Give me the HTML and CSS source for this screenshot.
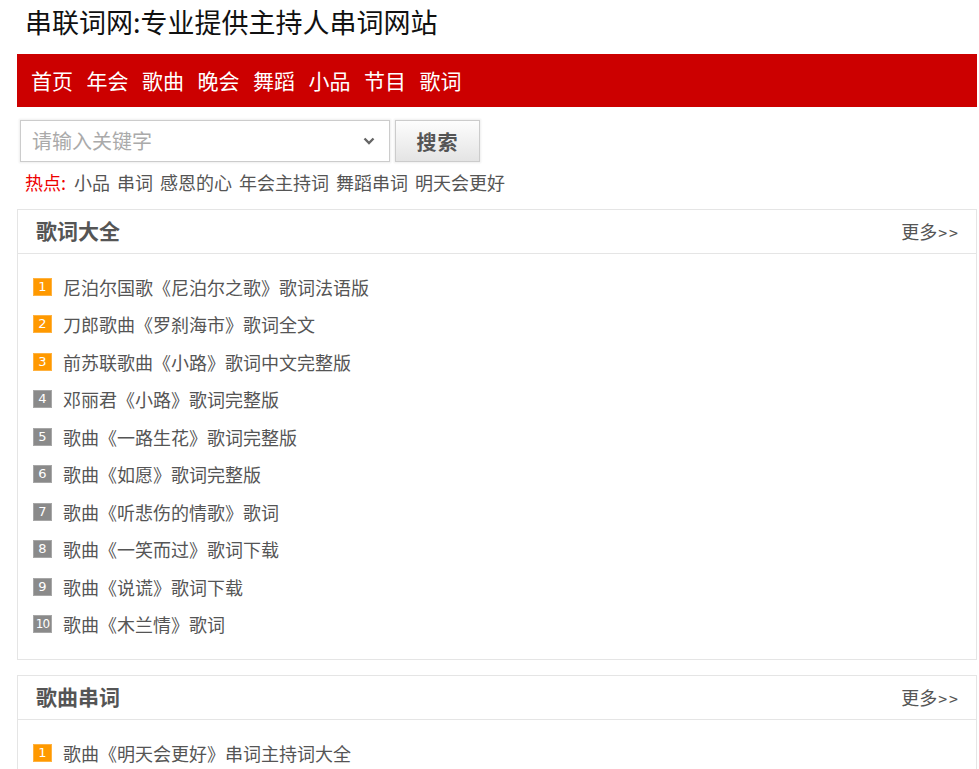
FILE: index.html
```html
<!DOCTYPE html>
<html lang="zh-CN">
<head>
<meta charset="utf-8">
<title>串联词网</title>
<link rel="stylesheet" href="styles.css">
</head>
<body>
<div class="page">
  <h1 class="site-title">串联词网:专业提供主持人串词网站</h1>
  <nav class="nav">
    <a>首页</a><a>年会</a><a>歌曲</a><a>晚会</a><a>舞蹈</a><a>小品</a><a>节目</a><a>歌词</a>
  </nav>
  <div class="search">
    <div class="search-box">
      <span class="placeholder">请输入关键字</span>
      <svg class="chev" width="12" height="8" viewBox="0 0 12 8"><path d="M1.5 1.5 L6 6 L10.5 1.5" fill="none" stroke="#666" stroke-width="2.4"/></svg>
    </div>
    <div class="search-btn">搜索</div>
  </div>
  <div class="hot"><span class="hot-label">热点:</span><a>小品</a><a>串词</a><a>感恩的心</a><a>年会主持词</a><a>舞蹈串词</a><a>明天会更好</a></div>

  <section class="box">
    <div class="box-head"><h2>歌词大全</h2><a class="more">更多<span class="arr">&gt;&gt;</span></a></div>
    <ul class="list">
      <li><span class="num hl">1</span>尼泊尔国歌《尼泊尔之歌》歌词法语版</li>
      <li><span class="num hl">2</span>刀郎歌曲《罗刹海市》歌词全文</li>
      <li><span class="num hl">3</span>前苏联歌曲《小路》歌词中文完整版</li>
      <li><span class="num">4</span>邓丽君《小路》歌词完整版</li>
      <li><span class="num">5</span>歌曲《一路生花》歌词完整版</li>
      <li><span class="num">6</span>歌曲《如愿》歌词完整版</li>
      <li><span class="num">7</span>歌曲《听悲伤的情歌》歌词</li>
      <li><span class="num">8</span>歌曲《一笑而过》歌词下载</li>
      <li><span class="num">9</span>歌曲《说谎》歌词下载</li>
      <li><span class="num two">10</span>歌曲《木兰情》歌词</li>
    </ul>
  </section>

  <section class="box">
    <div class="box-head"><h2>歌曲串词</h2><a class="more">更多<span class="arr">&gt;&gt;</span></a></div>
    <ul class="list">
      <li><span class="num hl">1</span>歌曲《明天会更好》串词主持词大全</li>
    </ul>
  </section>
</div>
</body>
</html>
```
FILE: styles.css
```css
* { box-sizing: border-box; }
body {
  margin: 0;
  font-family: "Noto Sans CJK SC", "Liberation Sans", sans-serif;
  color: #555;
  background: #fff;
}
.page {
  width: 960px;
  margin-left: 17px;
}
.site-title {
  margin: 0;
  height: 54px;
  padding: 5px 0 0 8px;
  font-size: 27px;
  line-height: 34px;
  font-weight: normal;
  color: #111;
}
.nav {
  height: 53px;
  background: #cc0000;
  display: flex;
  align-items: center;
  padding-left: 14px;
  padding-bottom: 2px;
  gap: 13.5px;
}
.nav a {
  color: #fff;
  font-size: 21px;
  line-height: 26px;
  width: 42px;
  white-space: nowrap;
}
.search {
  display: flex;
  gap: 5px;
  margin-top: 13px;
  margin-left: 3px;
}
.search-box {
  width: 370px;
  height: 42px;
  border: 1px solid #ccc;
  box-shadow: 0 0 2px 1px #eee;
  display: flex;
  align-items: center;
  justify-content: space-between;
  padding: 0 14px 0 11px;
}
.placeholder {
  font-size: 20px;
  color: #aaa;
  line-height: 26px;
}
.search-btn {
  width: 85px;
  height: 42px;
  border: 1px solid #ccc;
  box-shadow: 0 0 2px 1px #eee;
  background: linear-gradient(#fdfdfd, #e4e4e4);
  font-size: 20px;
  font-weight: bold;
  color: #555;
  display: flex;
  align-items: center;
  justify-content: center;
  letter-spacing: 1px;
}
.hot {
  display: flex;
  gap: 7px;
  margin-top: 8px;
  padding-left: 8px;
  font-size: 18px;
  line-height: 24px;
  height: 39px;
  color: #555;
}
.hot-label { color: #e00; margin-right: 1px; }
.box {
  border: 1px solid #e5e5e5;
  margin-bottom: 15px;
}
.box-head {
  height: 44px;
  border-bottom: 1px solid #e5e5e5;
  display: flex;
  align-items: center;
  justify-content: space-between;
  padding: 0 16px 4px 18px;
}
.box-head h2 {
  margin: 0;
  font-size: 21px;
  line-height: 28px;
  font-weight: bold;
  color: #555;
}
.more {
  font-size: 18px;
  color: #555;
  padding-top: 3px;
}
.more .arr {
  font-size: 16px;
  letter-spacing: 2px;
  margin-left: 1px;
}
.list {
  list-style: none;
  margin: 0;
  padding: 14px 0 16px 15px;
}
.list li {
  height: 37.5px;
  display: flex;
  align-items: center;
  font-size: 18px;
  color: #555;
  white-space: nowrap;
}
.num {
  width: 19px;
  height: 18px;
  background: #8a8a8a;
  color: #fff;
  font-family: "DejaVu Sans", sans-serif;
  font-size: 13px;
  line-height: 18px;
  text-align: center;
  margin-right: 11px;
  box-shadow: inset 0 0 0 1px rgba(255,255,255,0.25);
}
.num.hl { background: #ff9900; }
.num.two { font-size: 12px; letter-spacing: -1px; }
```
